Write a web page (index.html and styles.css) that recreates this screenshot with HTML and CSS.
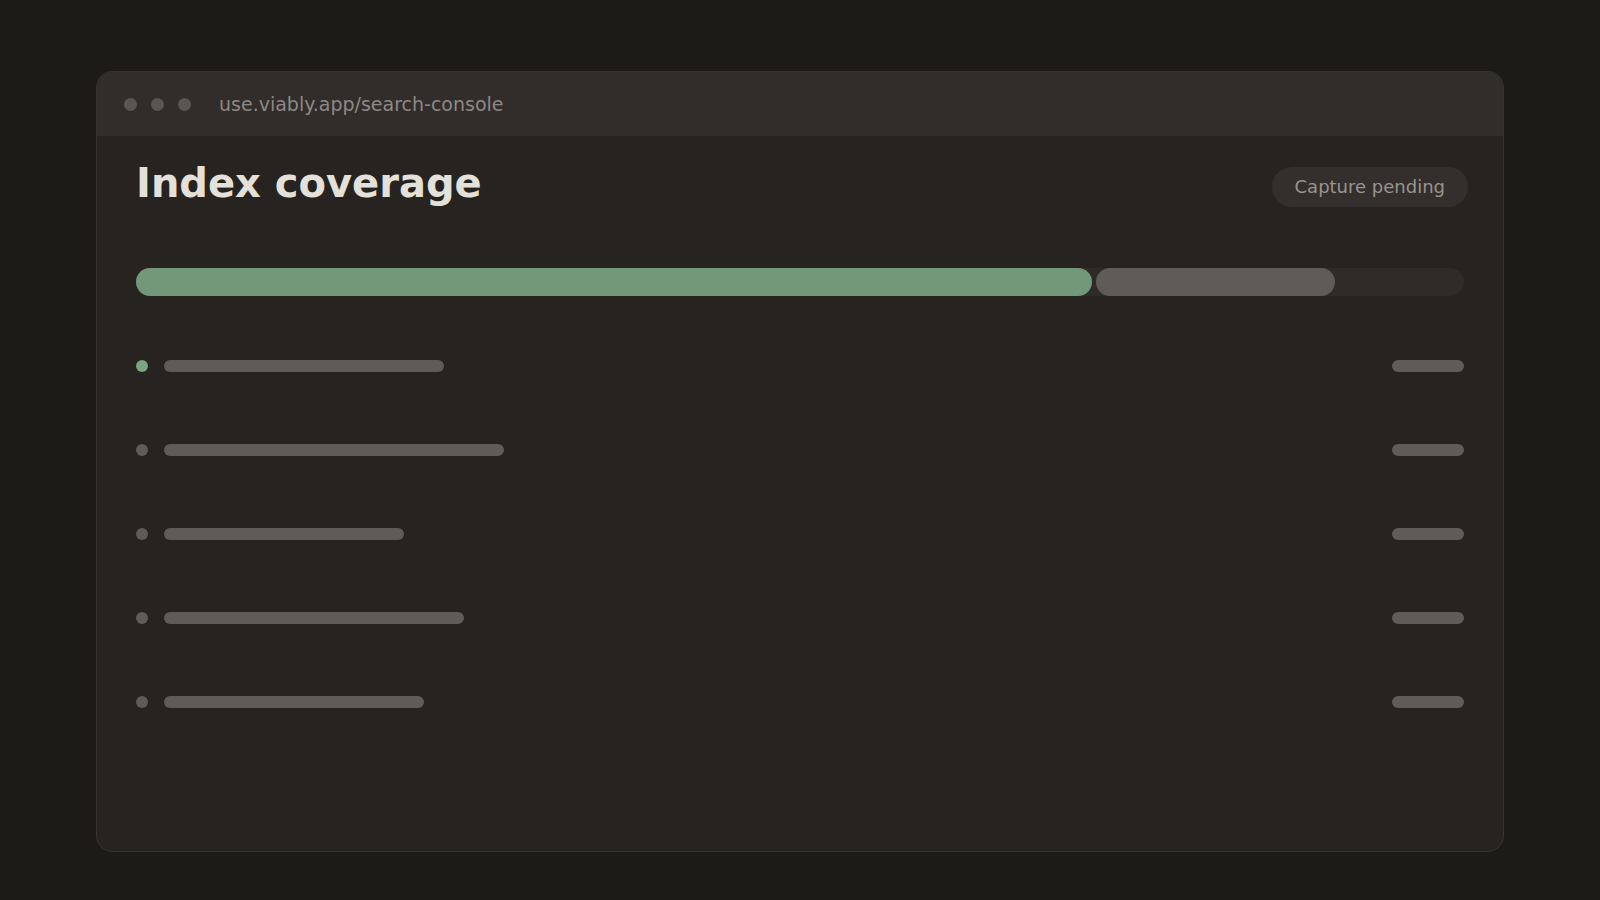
FILE: index.html
```html
<!DOCTYPE html>
<html lang="en">
<head>
<meta charset="utf-8">
<title>Index coverage</title>
<link rel="stylesheet" href="styles.css">
</head>
<body>
<div class="window">
  <div class="titlebar">
    <div class="dots"><span class="dot"></span><span class="dot"></span><span class="dot"></span></div>
    <div class="url">use.viably.app/search-console</div>
  </div>
  <div class="content">
    <div class="header">
      <h1 class="title">Index coverage</h1>
      <div class="pill">Capture pending</div>
    </div>
    <div class="track">
      <div class="seg seg-green" style="width: 72%"></div>
      <div class="seg seg-grey" style="width: 18%"></div>
    </div>
    <div class="rows">
      <div class="row"><span class="bullet bullet-green"></span><span class="line" style="width: 280px"></span><span class="value"></span></div>
      <div class="row"><span class="bullet"></span><span class="line" style="width: 340px"></span><span class="value"></span></div>
      <div class="row"><span class="bullet"></span><span class="line" style="width: 240px"></span><span class="value"></span></div>
      <div class="row"><span class="bullet"></span><span class="line" style="width: 300px"></span><span class="value"></span></div>
      <div class="row"><span class="bullet"></span><span class="line" style="width: 260px"></span><span class="value"></span></div>
    </div>
  </div>
</div>
</body>
</html>
```

FILE: styles.css
```css
* { box-sizing: border-box; }
html, body { margin: 0; padding: 0; }
body {
  background: #1c1b18;
  width: 1600px;
  height: 900px;
  padding: 71px 96px 0;
  font-family: "DejaVu Sans", sans-serif;
  overflow: hidden;
}
.window {
  height: 781px;
  background: #262320;
  border: 1px solid #36322e;
  border-radius: 16px;
  overflow: hidden;
}
.titlebar {
  height: 64px;
  background: #312d2a;
  display: flex;
  align-items: center;
  padding: 0 27px;
}
.dots { display: flex; gap: 14px; }
.dot {
  width: 13px;
  height: 13px;
  border-radius: 50%;
  background: #5a5551;
}
.url {
  margin-left: 28px;
  color: #8e8884;
  font-size: 19px;
}
.content {
  padding: 0 39px;
}
.header {
  display: flex;
  justify-content: space-between;
  align-items: flex-start;
  padding-top: 23px;
}
.title {
  margin: 0;
  font-size: 40px;
  font-weight: bold;
  color: #e4e0da;
  line-height: 1.2;
}
.pill {
  margin-top: 8px;
  margin-right: -4px;
  height: 40px;
  padding: 0 23px 1px;
  border-radius: 20px;
  background: #322f2c;
  color: #9a948f;
  font-size: 18px;
  display: flex;
  align-items: center;
}
.track {
  margin-top: 61px;
  height: 28px;
  border-radius: 14px;
  background: #2f2b28;
  display: flex;
  gap: 4px;
}
.seg { height: 100%; border-radius: 14px; }
.seg-green { background: #739779; }
.seg-grey { background: #5f5b57; }
.rows {
  margin-top: 28px;
  display: flex;
  flex-direction: column;
}
.row {
  height: 84px;
  display: flex;
  align-items: center;
}
.bullet {
  width: 12px;
  height: 12px;
  border-radius: 50%;
  background: #5f5b57;
  flex: none;
}
.bullet-green { background: #7aa583; }
.line {
  margin-left: 16px;
  height: 12px;
  border-radius: 6px;
  background: #5f5b57;
}
.value {
  margin-left: auto;
  width: 72px;
  height: 12px;
  border-radius: 6px;
  background: #5f5b57;
}
```
